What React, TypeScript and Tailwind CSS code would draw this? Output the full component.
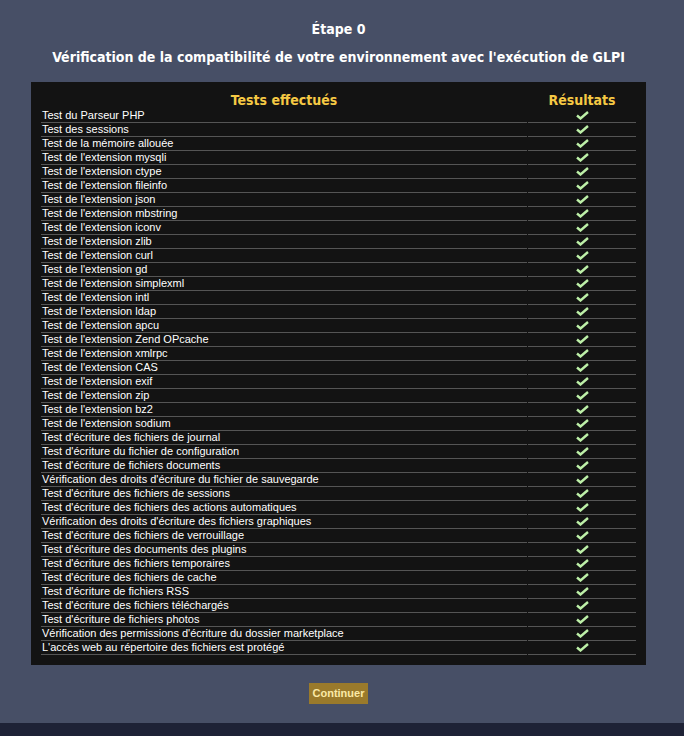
import React from 'react';

const tests = [
  "Test du Parseur PHP",
  "Test des sessions",
  "Test de la mémoire allouée",
  "Test de l'extension mysqli",
  "Test de l'extension ctype",
  "Test de l'extension fileinfo",
  "Test de l'extension json",
  "Test de l'extension mbstring",
  "Test de l'extension iconv",
  "Test de l'extension zlib",
  "Test de l'extension curl",
  "Test de l'extension gd",
  "Test de l'extension simplexml",
  "Test de l'extension intl",
  "Test de l'extension ldap",
  "Test de l'extension apcu",
  "Test de l'extension Zend OPcache",
  "Test de l'extension xmlrpc",
  "Test de l'extension CAS",
  "Test de l'extension exif",
  "Test de l'extension zip",
  "Test de l'extension bz2",
  "Test de l'extension sodium",
  "Test d'écriture des fichiers de journal",
  "Test d'écriture du fichier de configuration",
  "Test d'écriture de fichiers documents",
  "Vérification des droits d'écriture du fichier de sauvegarde",
  "Test d'écriture des fichiers de sessions",
  "Test d'écriture des fichiers des actions automatiques",
  "Vérification des droits d'écriture des fichiers graphiques",
  "Test d'écriture des fichiers de verrouillage",
  "Test d'écriture des documents des plugins",
  "Test d'écriture des fichiers temporaires",
  "Test d'écriture des fichiers de cache",
  "Test d'écriture de fichiers RSS",
  "Test d'écriture des fichiers téléchargés",
  "Test d'écriture de fichiers photos",
  "Vérification des permissions d'écriture du dossier marketplace",
  "L'accès web au répertoire des fichiers est protégé",
];

const Check = () => (
  <svg width="13" height="9" viewBox="0 0 13 9" className="block">
    <path d="M1 4.5 L4.5 7.5 L12 1" fill="none" stroke="#bdf0a8" strokeWidth="2.4" />
  </svg>
);

const App = () => {
  return (
    <div className="min-h-screen flex flex-col bg-[#474f66] font-['Liberation_Sans',Arial,sans-serif] text-white">
      <div className="flex-1 flex flex-col items-center pt-[20px] pr-[7px]">
        <h2 className="text-[14px] font-bold leading-[18px] font-['DejaVu_Sans_Condensed','DejaVu_Sans',sans-serif]">Étape 0</h2>
        <h3 className="mt-[10px] text-[14px] font-bold leading-[18px] font-['DejaVu_Sans_Condensed','DejaVu_Sans',sans-serif]">
          Vérification de la compatibilité de votre environnement avec l'exécution de GLPI
        </h3>

        <div className="mt-[16px] w-[615px] bg-[#131313] px-[9px] pt-[10px] pb-[10px]">
          <table className="w-full border-separate border-spacing-x-[1px] border-spacing-y-0">
            <thead>
              <tr className="text-[#f6c944] text-[14px] font-bold leading-[17px] font-['DejaVu_Sans_Condensed','DejaVu_Sans',sans-serif]">
                <th className="text-center">Tests effectués</th>
                <th className="w-[108px] text-center">Résultats</th>
              </tr>
            </thead>
            <tbody>
              {tests.map((t) => (
                <tr key={t} className="text-[11px] leading-[13px]">
                  <td className="border-b border-[#555] pl-[1px] h-[14px] whitespace-nowrap">{t}</td>
                  <td className="border-b border-[#555] h-[14px]">
                    <div className="flex justify-center pl-[1px]">
                      <Check />
                    </div>
                  </td>
                </tr>
              ))}
            </tbody>
          </table>
        </div>

        <button className="mt-[18px] bg-[#9a7a2b] px-[4px] h-[21px] text-[11px] font-bold text-[#fbe9a6]">
          Continuer
        </button>
      </div>
      <div className="h-[13px] mt-[19px] bg-[#1e2236]" />
    </div>
  );
};

export default App;
